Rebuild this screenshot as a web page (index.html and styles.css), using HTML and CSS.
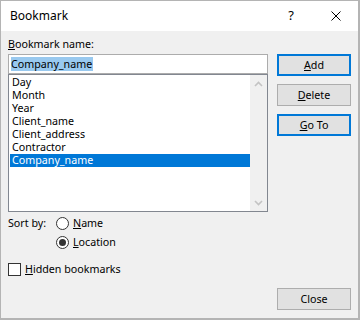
FILE: index.html
```html
<!DOCTYPE html>
<html>
<head>
<meta charset="utf-8">
<link rel="stylesheet" href="styles.css">
</head>
<body>
<div class="window">
  <div class="titlebar">
    <div class="title">Bookmark</div>
    <div class="tb-btn help">?</div>
    <div class="tb-btn close">
      <svg width="10" height="10" viewBox="0 0 10 10"><path d="M0.5 0.5L9.5 9.5M9.5 0.5L0.5 9.5" stroke="#000" stroke-width="1" fill="none"/></svg>
    </div>
  </div>
  <div class="content">
    <div class="left">
      <div class="label"><u>B</u>ookmark name:</div>
      <div class="field"><span class="sel">Company_name</span></div>
      <div class="list">
        <div class="items">
          <div class="item">Day</div>
          <div class="item">Month</div>
          <div class="item">Year</div>
          <div class="item">Client_name</div>
          <div class="item">Client_address</div>
          <div class="item">Contractor</div>
          <div class="item selected">Company_name</div>
        </div>
        <div class="scrollbar">
          <div class="arrow"><svg width="9" height="6" viewBox="0 0 9 6"><path d="M1 5L4.5 1.5L8 5" stroke="#c3c3c3" stroke-width="1.6" fill="none"/></svg></div>
          <div class="arrow"><svg width="9" height="6" viewBox="0 0 9 6"><path d="M1 1L4.5 4.5L8 1" stroke="#c3c3c3" stroke-width="1.6" fill="none"/></svg></div>
        </div>
      </div>
      <div class="sort">
        <div class="sort-label">Sort by:</div>
        <div class="opts">
          <div class="opt"><span class="radio"></span><span><u>N</u>ame</span></div>
          <div class="opt"><span class="radio on"></span><span><u>L</u>ocation</span></div>
        </div>
      </div>
      <div class="check"><span class="box"></span><span><u>H</u>idden bookmarks</span></div>
    </div>
    <div class="right">
      <div class="btn default"><span><u>A</u>dd</span></div>
      <div class="btn"><span><u>D</u>elete</span></div>
      <div class="btn default"><span><u>G</u>o To</span></div>
      <div class="btn last"><span>Close</span></div>
    </div>
  </div>
</div>
</body>
</html>
```
FILE: styles.css
```css
html, body {
  margin: 0;
  padding: 0;
  background: #ffffff;
}
body {
  font-family: "Noto Sans", "Open Sans", sans-serif;
  font-size: 10.7px;
  color: #000;
}
u {
  text-decoration: underline;
  text-underline-offset: 1px;
}
.window {
  width: 360px;
  height: 320px;
  box-sizing: border-box;
  border: 1px solid #b4b4b4;
  border-right-width: 2px;
  border-bottom-width: 2px;
  display: flex;
  flex-direction: column;
  background: #f0f0f0;
}
.titlebar {
  height: 30px;
  background: #fff;
  display: flex;
  align-items: center;
}
.title {
  flex: 1;
  padding-left: 9px;
  font-size: 12px;
  padding-bottom: 1px;
}
.tb-btn {
  width: 46px;
  height: 30px;
  display: flex;
  align-items: center;
  justify-content: center;
}
.help {
  font-size: 13px;
  padding-bottom: 2px;
  box-sizing: border-box;
}
.close {
  width: 44px;
  padding-bottom: 1px;
  box-sizing: border-box;
}
.content {
  flex: 1;
  display: flex;
  padding: 6px 6px 8px 7px;
  gap: 9px;
}
.left {
  width: 260px;
  display: flex;
  flex-direction: column;
}
.label {
  height: 17px;
  line-height: 15px;
}
.field {
  height: 20px;
  box-sizing: border-box;
  border: 1px solid #acacac;
  background: #fff;
  padding: 2px 0 0 2px;
}
.sel {
  display: inline-block;
  background: #99c9ef;
  line-height: 14px;
  height: 14px;
  padding-right: 1px;
}
.list {
  height: 138px;
  box-sizing: border-box;
  border: 1px solid #828790;
  background: #fff;
  display: flex;
}
.items {
  flex: 1;
  padding: 1px 0 0 1px;
}
.item {
  height: 13px;
  line-height: 13px;
  padding-left: 2px;
  white-space: nowrap;
  overflow: hidden;
}
.item.selected {
  background: #0078d7;
  color: #fff;
}
.scrollbar {
  width: 17px;
  background: #f0f0f0;
  display: flex;
  flex-direction: column;
  justify-content: space-between;
}
.arrow {
  height: 17px;
  display: flex;
  align-items: center;
  justify-content: center;
}
.sort {
  display: flex;
  margin-top: 2px;
}
.sort-label {
  width: 48px;
  line-height: 18px;
  height: 18px;
}
.opts {
  display: flex;
  flex-direction: column;
  gap: 1px;
}
.opt, .check {
  display: flex;
  align-items: center;
  height: 18px;
  gap: 4px;
}
.radio {
  width: 13px;
  height: 13px;
  box-sizing: border-box;
  border: 1px solid #333;
  border-radius: 50%;
  background: #fff;
  display: flex;
  align-items: center;
  justify-content: center;
}
.radio.on::after {
  content: "";
  width: 7px;
  height: 7px;
  border-radius: 50%;
  background: #333;
}
.check {
  margin-top: 9px;
}
.box {
  width: 13px;
  height: 13px;
  box-sizing: border-box;
  border: 1px solid #333;
  background: #fff;
}
.right {
  width: 74px;
  display: flex;
  flex-direction: column;
  gap: 8px;
  padding-top: 17px;
}
.btn {
  height: 22px;
  box-sizing: border-box;
  border: 1px solid #adadad;
  background: #e1e1e1;
  display: flex;
  align-items: center;
  justify-content: center;
  padding-bottom: 1px;
}
.btn.default {
  border: 2px solid #0078d7;
}
.btn.last {
  margin-top: auto;
}
```
